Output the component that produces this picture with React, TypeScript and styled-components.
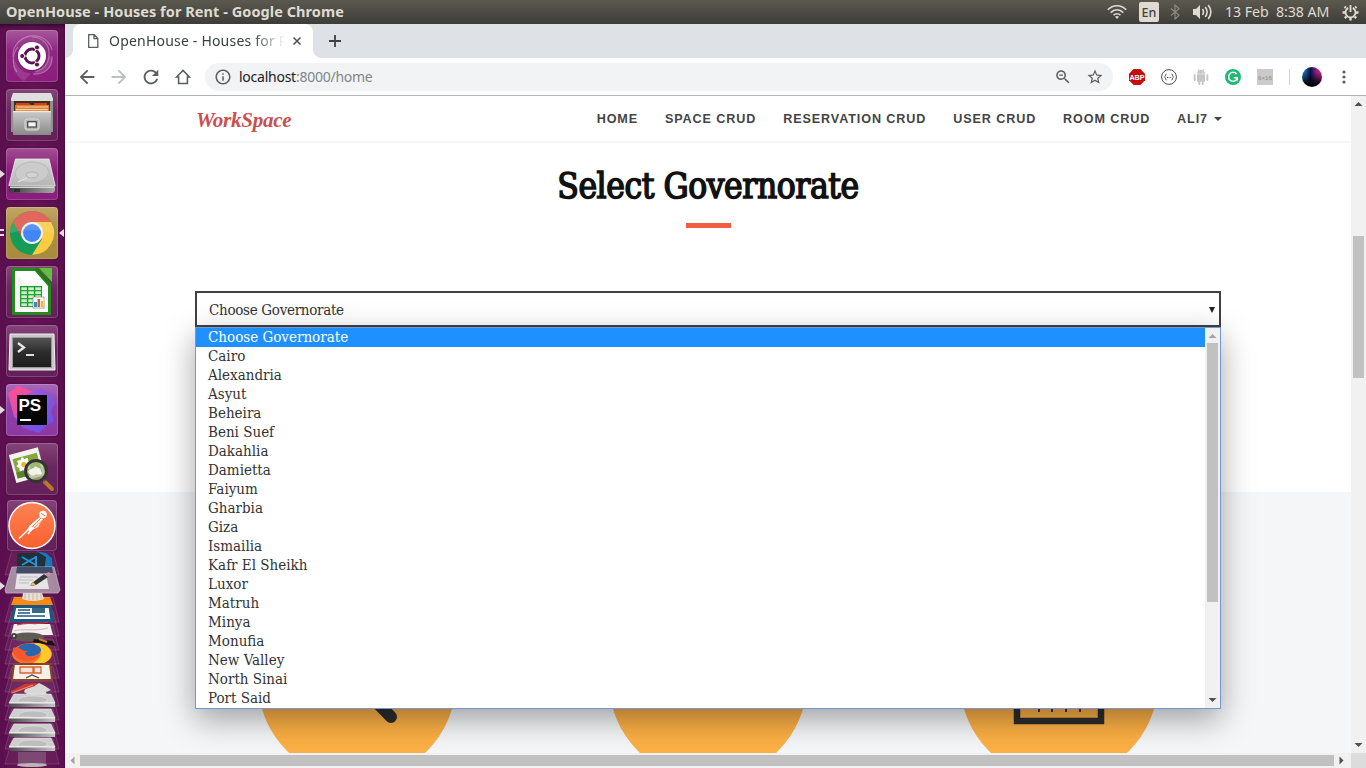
import React from 'react';
import styled, { createGlobalStyle, css } from 'styled-components';

const GlobalStyle = createGlobalStyle`
  *, *::before, *::after { box-sizing: border-box; }
  body { margin: 0; overflow: hidden; background: #fff; }
`;

const uiFont = '"Noto Sans", "Open Sans", sans-serif';
const serifFont = '"DejaVu Serif Condensed", "DejaVu Serif", serif';

/* ---------- desktop ---------- */

const Desktop = styled.div`
  display: flex;
  flex-direction: column;
  width: 1366px;
  height: 768px;
  overflow: hidden;
  font-family: ${uiFont};
`;

const Panel = styled.header`
  display: flex;
  align-items: center;
  height: 24px;
  flex: none;
  padding: 0 7px 0 6px;
  background: linear-gradient(#5b594f, #3d3c38);
  color: #dfdbd2;
`;

const PanelTitle = styled.div`
  flex: 1;
  font-size: 14.5px;
  font-weight: 700;
  line-height: 23px;
  padding-bottom: 1px;
  letter-spacing: 0.06px;
  white-space: pre;
`;

const Indicators = styled.div`
  display: flex;
  align-items: center;
  svg { display: block; }
`;

const Language = styled.div`
  width: 20px;
  height: 20px;
  margin: 0 11px 0 12px;
  border-radius: 2px;
  background: #dfdbd2;
  color: #45443f;
  font-size: 12.5px;
  line-height: 21px;
  font-weight: 500;
  text-align: center;
`;

const VolumeSlot = styled.div`
  margin-left: 13px;
`;

const Clock = styled.div`
  width: 106px;
  margin: 0 11px 0 12px;
  font-size: 14.2px;
  letter-spacing: -0.05px;
  line-height: 24px;
  white-space: pre;
`;

const Work = styled.div`
  display: flex;
  flex: 1;
  min-height: 0;
`;

/* ---------- launcher ---------- */

const Launcher = styled.nav`
  display: flex;
  flex-direction: column;
  width: 65px;
  flex: none;
  padding-top: 6px;
  background:
    linear-gradient(rgba(30, 0, 25, 0.55), transparent 5px),
    linear-gradient(90deg, #5b0f4e, #651455 50%, #5b0f4e 97%, #4a0b40);
`;

const Tile = styled.div<{ $bg?: string; $running?: boolean; $active?: boolean; $small?: boolean }>`
  position: relative;
  width: ${p => (p.$small ? 50 : 52)}px;
  height: ${p => (p.$small ? 51 : 52)}px;
  margin: ${p => (p.$small ? '-2px 0 -2px 7px' : '0 0 7px 6px')};
  flex: none;
  border-radius: 4px;
  background: ${p => p.$bg || 'linear-gradient(#854479, #6a2660 45%, #642059)'};
  box-shadow: inset 0 0 0 1px rgba(255, 255, 255, 0.18), 0 0 2px rgba(40, 0, 35, 0.5);
  svg { display: block; }
  ${p => p.$running && css`
    &::before {
      content: '';
      position: absolute;
      left: -6px;
      top: 22px;
      border: 4px solid transparent;
      border-left: 5px solid #e2dce0;
      border-right: 0;
    }
  `}
  ${p => p.$active && css`
    &::before {
      content: '';
      position: absolute;
      left: -6px;
      top: 22px;
      width: 4px;
      height: 7px;
      border-top: 2.5px solid #e2dce0;
      border-bottom: 2.5px solid #e2dce0;
    }
    &::after {
      content: '';
      position: absolute;
      right: -6px;
      top: 22px;
      border: 4px solid transparent;
      border-right: 5px solid #e2dce0;
      border-left: 0;
    }
  `}
`;

/* ---------- browser chrome ---------- */

const Browser = styled.div`
  display: flex;
  flex-direction: column;
  flex: 1;
  min-width: 0;
`;

const TabStrip = styled.div`
  display: flex;
  height: 34px;
  flex: none;
  padding-left: 8px;
  background: #dee1e6;
`;

const Tab = styled.div`
  position: relative;
  display: flex;
  align-items: center;
  width: 240px;
  height: 34px;
  padding-left: 14px;
  border-radius: 8px 8px 0 0;
  background: #fff;
  &::before, &::after {
    content: '';
    position: absolute;
    bottom: 0;
    width: 8px;
    height: 8px;
  }
  &::before { left: -8px; background: radial-gradient(circle at 0 0, transparent 7.5px, #fff 8px); }
  &::after { right: -8px; background: radial-gradient(circle at 100% 0, transparent 7.5px, #fff 8px); }
  svg { flex: none; }
`;

const TabTitle = styled.div`
  width: 176px;
  margin: 0 8px 0 10px;
  overflow: hidden;
  white-space: nowrap;
  font-size: 14px;
  letter-spacing: 0.2px;
  line-height: 34px;
  color: #3c4043;
  -webkit-mask-image: linear-gradient(90deg, #000 82%, transparent 100%);
  mask-image: linear-gradient(90deg, #000 82%, transparent 100%);
`;

const NewTab = styled.svg`
  margin: 10px 0 0 15px;
`;

const Toolbar = styled.div`
  display: flex;
  align-items: center;
  height: 38px;
  flex: none;
  padding-left: 6px;
  background: #fff;
  border-bottom: 1px solid #b3b4b6;
`;

const ToolCell = styled.div`
  display: flex;
  align-items: center;
  justify-content: center;
  width: 32px;
  height: 36px;
  flex: none;
`;

const Omnibox = styled.div`
  display: flex;
  align-items: center;
  width: 908px;
  height: 28px;
  margin: 1px 8px 0 6px;
  padding: 0 2px 0 2px;
  border-radius: 14px;
  background: #f1f3f4;
`;

const Url = styled.div`
  flex: 1;
  font-size: 14px;
  line-height: 20px;
  letter-spacing: -0.25px;
  color: #80868b;
  b { font-weight: 400; color: #202124; }
`;

const Divider = styled.div`
  width: 1px;
  height: 16px;
  margin: 0 6px 0 8px;
  background: #d0d2d5;
`;

const Avatar = styled.div`
  width: 20px;
  height: 20px;
  border-radius: 50%;
  background:
    linear-gradient(rgba(0, 0, 0, 0) 25%, rgba(0, 0, 10, 0.95) 85%),
    linear-gradient(90deg, #1688b8, #124c8c 25%, #0d0d3c 42%, #3a1b6a 55%, #a01f80 75%, #e8188a);
`;

const SizeBadge = styled.div`
  width: 16px;
  height: 16px;
  background: #cacaca;
  color: #8a8a8a;
  font: 6.2px/17px "Liberation Sans", sans-serif;
  text-align: center;
  white-space: nowrap;
`;

/* ---------- page ---------- */

const PageRow = styled.div`
  display: flex;
  flex: 1;
  min-height: 0;
`;

const Page = styled.main`
  flex: 1;
  min-width: 0;
  height: 657px;
  overflow: hidden;
  background: #fff;
`;

const Navbar = styled.div`
  display: flex;
  align-items: center;
  height: 47px;
  padding: 0 129px 0 131px;
  border-bottom: 2px solid #f6f6f7;
`;

const Brand = styled.div`
  flex: 1;
  padding-top: 3px;
  font: italic 700 21px/40px "Liberation Serif", serif;
  letter-spacing: -0.25px;
  color: #c9504f;
`;

const Menu = styled.div`
  display: flex;
  gap: 26.9px;
  font: 700 12.6px/20px "Liberation Sans", sans-serif;
  letter-spacing: 0.9px;
  color: #444;
  white-space: nowrap;
`;

const Caret = styled.span`
  display: inline-block;
  margin-left: 6px;
  vertical-align: 2px;
  border: 4px solid transparent;
  border-top: 4px solid #444;
  border-bottom: 0;
`;

const Picker = styled.section`
  display: flex;
  flex-direction: column;
  align-items: center;
  height: 349px;
  padding-top: 21px;
`;

const Heading = styled.h2`
  margin: 0;
  font-family: ${serifFont};
  font-size: 35px;
  font-weight: 400;
  line-height: 44px;
  letter-spacing: -0.42px;
  color: #111;
  -webkit-text-stroke: 1.5px #111;
  white-space: nowrap;
`;

const Accent = styled.div`
  width: 45px;
  height: 5px;
  margin: 15px 0 63px 1px;
  background: #f15e41;
`;

const SelectWrap = styled.div`
  position: relative;
  width: 1026px;
  font-family: ${serifFont};
  font-size: 15px;
  color: #333;
`;

const SelectBox = styled.div`
  display: flex;
  align-items: center;
  justify-content: space-between;
  height: 36px;
  padding: 1px 4px 0 12px;
  border: 2px solid #404142;
  background: #fff;
  letter-spacing: -0.3px;
`;

const Popup = styled.div`
  position: absolute;
  z-index: 2;
  top: 36px;
  left: 0;
  display: flex;
  width: 1026px;
  height: 382px;
  border: 1px solid #7596d3;
  background: #fff;
  box-shadow: 0 10px 30px rgba(0, 0, 0, 0.36);
`;

const Options = styled.ul`
  flex: 1;
  margin: 0;
  padding: 0;
  overflow: hidden;
  list-style: none;
`;

const Option = styled.li<{ $selected?: boolean }>`
  height: 19px;
  padding-left: 12px;
  line-height: 18px;
  ${p => p.$selected && css`
    background: #1e90ff;
    color: #fff;
  `}
`;

const Features = styled.section`
  display: flex;
  justify-content: center;
  gap: 153px;
  height: 400px;
  padding-top: 90px;
  background: #f5f6f8;
`;

const Disc = styled.div`
  width: 198px;
  height: 198px;
  border-radius: 50%;
  background: #fdb045;
  svg { display: block; }
`;

/* ---------- scrollbars ---------- */

const VTrack = styled.div`
  display: flex;
  flex-direction: column;
  align-items: center;
  width: 15px;
  flex: none;
  background: #f1f1f1;
`;

const VThumb = styled.div<{ $offset: number; $size: number }>`
  width: 11px;
  height: ${p => p.$size}px;
  margin-top: ${p => p.$offset}px;
  background: #c1c1c1;
`;

const HTrack = styled.div`
  display: flex;
  align-items: center;
  height: 15px;
  flex: none;
  background: #f1f1f1;
`;

const HThumb = styled.div`
  width: 1254px;
  height: 11px;
  background: #c1c1c1;
`;

const Corner = styled.div`
  width: 15px;
  height: 15px;
  margin-left: auto;
  background: #dcdcdc;
`;

type Dir = 'up' | 'down' | 'left' | 'right';
const arrowPaths: Record<Dir, string> = {
  up: 'M3.5 10 7.5 6l4 4z',
  down: 'M3.500 5h8l-4 4z',
  left: 'M9.500 3.500v8l-4-4z',
  right: 'M5.500 3.500v8l4-4z',
};

const ScrollArrow = ({ dir, dim }: { dir: Dir; dim?: boolean }) => (
  <svg width="15" height="15" viewBox="0 0 15 15">
    <path d={arrowPaths[dir]} fill={dim ? '#a3a3a3' : '#505050'} />
  </svg>
);

const PushEnd = styled.div`
  height: 15px;
  margin-top: auto;
  svg { display: block; }
`;

/* ---------- launcher icons ---------- */

const Svg52 = ({ children }: { children: React.ReactNode }) => (
  <svg width="52" height="52" viewBox="0 0 52 52">{children}</svg>
);

const DashIcon = () => (
  <Svg52>
    <g fill="none" stroke="#fff" strokeOpacity=".3" strokeWidth="1.2">
      <path d="M7 27C6 14 17 5 30 6c9 1 15 8 16 14M11 42C6 36 6 23 12 17M46 26c1 12-8 19-19 18M26 7c11 0 18 8 17 19-1 8-6 14-14 16" />
    </g>
    <path d="M46 28c0 12-9 17-20 16 9-3 16-8 17-18zM18 51C9 46 5 36 8 27c2 10 8 15 17 17z" fill="#fff" opacity=".12" />
    <circle cx="26" cy="26.500" r="14.500" fill="#3c0a34" opacity=".3" />
    <circle cx="26" cy="26" r="14" fill="#fff" />
    <circle cx="26" cy="26" r="7" fill="none" stroke="#5e1150" strokeWidth="3" />
    <path d="M26 26 12 26M26 26l7-12.100M26 26l7 12.100" stroke="#fff" strokeWidth="1" />
    <circle cx="26" cy="26" r="5.300" fill="#fff" />
    <g fill="#5e1150" stroke="#fff" strokeWidth=".9">
      <circle cx="16.200" cy="26" r="2.500" /><circle cx="31" cy="17.400" r="2.500" /><circle cx="31" cy="34.600" r="2.500" />
    </g>
  </Svg52>
);

const FilesIcon = () => (
  <Svg52>
    <defs>
      <linearGradient id="cab" x2="0" y2="1"><stop stopColor="#cacaca" /><stop offset="1" stopColor="#8a8a8a" /></linearGradient>
    </defs>
    <path d="M7 4h38l2 6v33H5V10z" fill="#8f8f8f" />
    <path d="M7 4h38l2 6v2H5v-2z" fill="#dedede" />
    <path d="M8 12h36v11H8z" fill="#3f2d20" />
    <path d="M9 16h34v7H9z" fill="#e07a2c" /><path d="M10 14h13l2 2H10zM28 14h13v2H28z" fill="#c9461d" />
    <path d="M11 17.500h31v1H11zM10 20h32v1.300H10z" fill="#f8d6a8" />
    <path d="M7 22h38v24H7z" fill="url(#cab)" /><path d="M7 22h38v1.300H7z" fill="#ececec" />
    <rect x="19" y="30" width="14" height="11" rx="2" fill="#b4b4b4" stroke="#dcdcdc" />
    <rect x="21.700" y="32.700" width="8.600" height="5.300" fill="#f2f2f2" stroke="#444" strokeWidth="1.200" />
  </Svg52>
);

const DriveIcon = () => (
  <Svg52>
    <defs>
      <linearGradient id="drv" x2="0" y2="1"><stop stopColor="#d6d6d6" /><stop offset="1" stopColor="#b5b5b5" /></linearGradient>
      <linearGradient id="drvf"><stop stopColor="#3a3a3a" /><stop offset="1" stopColor="#a9a9a9" /></linearGradient>
    </defs>
    <path d="M9.500 11h33.500L49 37v1H3v-1z" fill="url(#drv)" stroke="#eee" strokeWidth=".8" />
    <path d="M3 38h46v5l-2 2H5l-2-2z" fill="url(#drvf)" />
    <path d="M4 38.500h44v1.500H4z" fill="#d8d8d8" /><path d="M9 41v3M11 41v3M13 41v3" stroke="#111" />
    <path d="M12 31C5 24 13 14 26 14s20 8 15 14c-3 6-14 8-22 6-3-1-5-1-7-3z" fill="#cbcbcb" stroke="#b2b2b2" strokeWidth=".8" />
    <ellipse cx="26" cy="27" rx="6" ry="3" fill="#d2d2d2" stroke="#aaa" strokeWidth=".8" />
    <path d="m12 34 9-4" stroke="#e4e4e4" strokeWidth="1.200" />
  </Svg52>
);

const ChromeIcon = () => (
  <Svg52>
    <circle cx="26" cy="26" r="22" fill="#179b59" />
    <path d="M26 15h19.100A22 22 0 0 1 26 48l10-16z" fill="#fbcb42" />
    <path d="M26 15h19.100a22 22 0 0 0-38.100 0l9.500 16.500A11 11 0 0 1 26 15z" fill="#de5246" />
    <circle cx="26" cy="26" r="11" fill="#f3f3f3" /><circle cx="26" cy="26" r="9" fill="#4285f4" />
    <path d="M4 26a22 22 0 0 1 44 0Q26 20 4 26z" fill="#fff" opacity=".13" />
  </Svg52>
);

const CalcIcon = () => (
  <Svg52>
    <path d="M6 2h26l13 15v32H6z" fill="#248a1c" />
    <path d="M9 5h20l13 15v26H9z" fill="#fff" /><path d="m12 43V10l30 30v3z" fill="#e9e9e9" opacity=".6" />
    <path d="M33 2h13v14z" fill="#5fc23b" /><path d="m30 3 15 16" stroke="#1f7a18" strokeWidth="3" />
    <rect x="14" y="20" width="22" height="21" fill="#1d9a34" />
    <g fill="#c9f3c5">
      {[0, 1, 2, 3, 4].map(r => [0, 1, 2].map(c => <rect key={`${r}${c}`} x={15.3 + c * 7} y={21.3 + r * 4} width="5.600" height="2.800" />))}
    </g>
    <rect x="27" y="31" width="11" height="11" fill="#fff" stroke="#888" strokeWidth=".7" />
    <path d="M28 36h3v5h-3z" fill="#2b8ed6" /><path d="M31.500 33h2.500v8h-2.500z" fill="#e05a1f" /><path d="M34.700 35h2.500v6h-2.500z" fill="#f2b632" />
  </Svg52>
);

const TerminalIcon = () => (
  <Svg52>
    <defs><linearGradient id="trm" x2="0" y2="1"><stop stopColor="#555" /><stop offset=".5" stopColor="#2c2c2c" /><stop offset="1" stopColor="#1d1d1d" /></linearGradient></defs>
    <path d="M4 9h44l1 36H3z" fill="#c9c9c9" stroke="#efefef" />
    <rect x="6.500" y="12.500" width="39" height="30" fill="url(#trm)" stroke="#9b9b9b" />
    <path d="m12 18 6 4.500-6 4.500" fill="none" stroke="#e8e8e8" strokeWidth="2.300" /><path d="M20 30h8" stroke="#f2f2f2" strokeWidth="1.800" />
  </Svg52>
);

const StormText = styled.text`
  font: 700 17px "Liberation Sans", sans-serif;
  fill: #fff;
`;

const StormIcon = () => (
  <Svg52>
    <defs>
      <linearGradient id="st1" x2=".6" y2="1"><stop stopColor="#ff4f8e" /><stop offset=".5" stopColor="#e650a8" /><stop offset="1" stopColor="#9a4dff" /></linearGradient>
      <linearGradient id="st2" x2="1" y2="1"><stop stopColor="#b455d2" /><stop offset="1" stopColor="#5a55f7" /></linearGradient>
    </defs>
    <path d="M2 9 12 2l14 5 15 10-20 24-13-8z" fill="url(#st1)" />
    <path d="M21 10 35 4l10 6 4 9-4 8 3 10-8 5-7 7-16-5-7-8z" fill="url(#st2)" opacity=".9" />
    <rect x="11" y="11" width="30" height="30" fill="#050505" />
    <StormText x="12.500" y="26.800">PS</StormText>
    <path d="M14 36h11" stroke="#fff" strokeWidth="2" />
  </Svg52>
);

const ViewerIcon = () => (
  <Svg52>
    <g transform="rotate(-15 20 22)">
      <rect x="6" y="8" width="30" height="29" fill="#f2f2ef" /><rect x="8.500" y="13" width="25" height="20" fill="#84a83a" />
      <path d="M8.500 27h25v6h-25z" fill="#5b812a" />
      {[0, 45, 90, 135].map(a => <ellipse key={a} cx="18" cy="21" rx="7.500" ry="2.600" fill="#fff" transform={`rotate(${a} 18 21)`} />)}
      <circle cx="18" cy="21" r="2.600" fill="#efb32c" />
    </g>
    <path d="m39 39 7 7" stroke="#b77a2b" strokeWidth="4" strokeLinecap="round" /><path d="m36 35 3 3" stroke="#555" strokeWidth="3" />
    <circle cx="30" cy="28" r="10.500" fill="#a9bc84" fillOpacity=".75" stroke="#333" strokeWidth="2.800" />
    <path d="M22 29c2-5 6-2 7-6 2 2 6 1 6 5 3 4-2 4-5 3-4 3-6 1-8-2z" fill="#fff" opacity=".85" />
  </Svg52>
);

const PostmanIcon = () => (
  <svg width="50" height="51" viewBox="0 0 50 51">
    <defs><linearGradient id="pm" x2="0" y2="1"><stop stopColor="#fb8454" /><stop offset="1" stopColor="#fb5f2e" /></linearGradient></defs>
    <circle cx="25" cy="25.500" r="23" fill="url(#pm)" stroke="#fff" strokeWidth="1.500" />
    <circle cx="36" cy="14.500" r="3.800" fill="#fff" />
    <path d="m33 17-10 8-3 5 3 1 8-4 5-8z" fill="#fff" /><path d="M22 29 12 38.500M25 29l-4 5" stroke="#fff" strokeWidth="1.600" />
    <path d="m34 18-9 9M31 17l-8 8M36 20l-9 8" stroke="#f9734a" strokeWidth="1" />
    <path d="m34 13 4 3" stroke="#f9734a" strokeWidth="1" />
  </svg>
);

const fanTops = [1, 48, 62, 76, 90, 104, 118, 132, 146, 160, 175, 190];

const FoldedStack = () => (
  <svg width="65" height="219" viewBox="0 0 65 219">
    <defs>
      <linearGradient id="mini"><stop stopColor="#4a4a4a" /><stop offset="1" stopColor="#c5c5c5" /></linearGradient>
    </defs>
    {fanTops.map(y => (
      <path key={y} d={`M12 ${y}h41l6 25H5z`} fill="#fff" fillOpacity=".05" stroke="#fff" strokeOpacity=".17" strokeWidth=".8" />
    ))}
    <path d="M17 4 46 4l6 4 1 15-36 1z" fill="#22303b" /><path d="m36 2 10 2 6 5 1 14-9 1 2-16z" fill="#1876bd" />
    <path d="m22 8 14 8M36 8 22 16M36 7v11" stroke="#2294db" strokeWidth="2" fill="none" />
    <path d="M12 18h42l6 23-2 3H6l-1-3z" fill="#aa93a8" fillOpacity=".93" stroke="#c3b1c1" strokeWidth=".8" />
    <path d="M17 18h35l1 6H16z" fill="#1f3a55" opacity=".75" />
    <path d="M17 25h29l3 15H15z" fill="#e6e4e6" /><path d="M20 28h18M19 31h14M19 34h10" stroke="#bdbdbd" />
    <path d="m32 34 12-9 4 3-12 8-6 1z" fill="#333" /><path d="m45 25 4-2 2 2-3 3z" fill="#cf8db2" /><path d="m30 37 3-4 3 3z" fill="#d8c46a" />
    <path d="M0 33l5 4-5 4z" fill="#e2dce0" />
    <path d="M14 48h36l3 8H11z" fill="#f68a13" /><path d="M23 44h19l2 6q-11 4-22 0z" fill="#e4e0dc" /><path d="M25 44v6M29 44v7M33 44v7M37 44v7M41 44v6" stroke="#c99b60" strokeWidth=".6" />
    <path d="M15 57.500h35l2 14H12z" fill="#fff" stroke="#1b577f" strokeWidth="3" /><path d="M18 61h12M18 64h12M17 67h28" stroke="#1b577f" strokeWidth="1.300" /><path d="M32 59h13v5H32z" fill="#356987" />
    <path d="M14 75h36l3 11H11z" fill="#f3f1ef" /><path d="M17 76c12-4 15 1 31-3" stroke="#c9353f" strokeWidth="1.200" fill="none" /><path d="M14 82c8-3 20 1 34-3" stroke="#d8a0a4" strokeWidth=".8" fill="none" />
    <ellipse cx="28" cy="88" rx="16" ry="4.500" fill="#605a55" /><circle cx="14" cy="87" r="3" fill="#45403c" /><circle cx="14" cy="87" r="1" fill="#fff" /><path d="m34 90 18 2 4 5-7-1-16-3z" fill="#171310" /><path d="m39 90 8 3" stroke="#cc7c2e" strokeWidth="2" />
    <ellipse cx="32" cy="105" rx="20" ry="11" fill="#f9732a" /><path d="M34 94c15-1 19 9 17 14-4 7-11 8-18 6 13-7 7-14 1-20z" fill="#ffc928" />
    <ellipse cx="29" cy="101" rx="12" ry="6.500" fill="#2867ad" /><path d="M13 99c7-2 9 4 15 3l-3 2c2 5 11 5 16 0-4 10-24 12-28-1z" fill="#f4572e" />
    <path d="M14 115h36l2 16H12z" fill="#f5f0e8" stroke="#8a4520" strokeWidth="2" /><path d="M20 118h13v6H20zM34 118h7v6h-7z" fill="#fbe2d3" stroke="#d56436" strokeWidth="1.300" /><path d="m26 129 6-3 7 3" fill="none" stroke="#51413a" strokeWidth="1.200" />
    <path d="m27 135 7 2 5-3 6 3 6 4-5 2 1 3-9-1-8 2-6-4z" fill="#d8d8d8" /><path d="m11 145 24-8 2-3-12 1-14 7z" fill="#cf3b32" /><path d="M12 144 33 136" stroke="#f38a7e" />
    {[158, 173, 188, 202].map(y => (
      <g key={y}>
        <path d={`M14 ${y - 13}h37l4 9H9z`} fill="#cecece" stroke="#eee" strokeWidth=".6" />
        <path d={`M17 ${y - 5}c3-6 10-6 18-6s14 3 12 5-9 2-18 1z`} fill="#bdbdbd" stroke="#e3e3e3" strokeWidth=".7" />
        <path d={`M9 ${y - 4}h46v4H11l-2-1z`} fill="url(#mini)" /><path d={`M9 ${y - 4}h46`} stroke="#f4f4f4" />
      </g>
    ))}
    <path d="M18 203h28v14H18z" fill="#aaa" opacity=".3" /><ellipse cx="32" cy="216" rx="15" ry="2" fill="#b9b4b0" />
  </svg>
);

/* ---------- small icons ---------- */

const Glyph = ({ d, size, fill = '#5a5e62' }: { d: string; size: number; fill?: string }) => (
  <svg width={size} height={size} viewBox="0 0 24 24"><path d={d} fill={fill} /></svg>
);

const glyphs = {
  back: 'M20 11H7.830l5.590-5.590L12 4l-8 8 8 8 1.410-1.410L7.830 13H20v-2z',
  forward: 'M12 4l-1.410 1.410L16.170 11H4v2h12.170l-5.580 5.590L12 20l8-8z',
  reload: 'M17.650 6.350C16.200 4.900 14.210 4 12 4c-4.420 0-7.990 3.580-7.990 8s3.570 8 7.990 8c3.730 0 6.840-2.550 7.730-6h-2.080c-.82 2.330-3.040 4-5.650 4-3.310 0-6-2.690-6-6s2.690-6 6-6c1.660 0 3.140.69 4.220 1.780L13 11h7V4l-2.350 2.350z',
  info: 'M11 7h2v2h-2zm0 4h2v6h-2zm1-9C6.480 2 2 6.480 2 12s4.480 10 10 10 10-4.480 10-10S17.520 2 12 2zm0 18c-4.410 0-8-3.590-8-8s3.590-8 8-8 8 3.590 8 8-3.590 8-8 8z',
  zoomOut: 'M15.500 14h-.79l-.28-.27C15.410 12.590 16 11.110 16 9.500 16 5.910 13.090 3 9.500 3S3 5.910 3 9.500 5.910 16 9.500 16c1.610 0 3.090-.59 4.230-1.570l.27.28v.79l5 4.990L20.490 19l-4.990-5zm-6 0C7.010 14 5 11.990 5 9.500S7.010 5 9.500 5 14 7.010 14 9.500 11.990 14 9.500 14zM7 8.800h5v1.400H7z',
  star: 'M22 9.240l-7.190-.62L12 2 9.190 8.630 2 9.240l5.460 4.730L5.820 21 12 17.270 18.180 21l-1.630-7.030L22 9.240zM12 15.400l-3.760 2.270 1-4.280-3.320-2.880 4.380-.38L12 6.100l1.710 4.040 4.380.38-3.320 2.880 1 4.280L12 15.400z',
  android: 'M6 18c0 .55.45 1 1 1h1v3.500c0 .83.67 1.500 1.500 1.500s1.500-.67 1.500-1.500V19h2v3.500c0 .83.67 1.500 1.500 1.500s1.500-.67 1.500-1.500V19h1c.55 0 1-.45 1-1V8H6v10zM2.500 8C1.670 8 1 8.670 1 9.500v7c0 .83.67 1.500 1.500 1.500S4 17.330 4 16.500v-7C4 8.670 3.330 8 2.500 8zm19 0c-.83 0-1.500.67-1.500 1.500v7c0 .83.67 1.500 1.500 1.500s1.500-.67 1.500-1.500v-7c0-.83-.67-1.500-1.500-1.500zm-5.970-5.840l1.300-1.300c.2-.2.2-.51 0-.71-.2-.2-.51-.2-.71 0l-1.480 1.480C13.850 1.230 12.950 1 12 1c-.96 0-1.860.23-2.660.63L7.850.15c-.2-.2-.51-.2-.71 0-.2.2-.2.51 0 .71l1.310 1.310C6.970 3.260 6 5.010 6 7h12c0-1.990-.97-3.750-2.470-4.840zM10 5H9V4h1v1zm5 0h-1V4h1v1z',
};

const HomeGlyph = () => (
  <svg width="18" height="18" viewBox="0 0 18 18">
    <path d="M2.600 9 9 2.500 15.400 9h-2v6.500H4.600V9z" fill="none" stroke="#5a5e62" strokeWidth="1.600" />
  </svg>
);

const BadgeText = styled.text`
  font: 700 7.2px "Liberation Sans", sans-serif;
  fill: #fff;
  text-anchor: middle;
`;

const AdblockGlyph = () => (
  <svg width="16" height="16" viewBox="0 0 16 16">
    <path d="M4.700 0h6.600L16 4.700v6.600L11.300 16H4.700L0 11.300V4.700z" fill="#c70d0c" />
    <BadgeText x="8" y="10.600">ABP</BadgeText>
  </svg>
);

const BracesGlyph = () => (
  <svg width="16" height="16" viewBox="0 0 16 16" fill="none" stroke="#4c4c4c">
    <circle cx="8" cy="8" r="7.400" />
    <path d="M5.500 5C4 5 5 7.500 3.500 8 5 8.500 4 11 5.500 11M10.500 5C12 5 11 7.500 12.500 8 11 8.500 12 11 10.500 11" />
    <path d="M6 8.500h1M7.600 8.500h.9M9.200 8.500h.9" strokeWidth=".9" />
  </svg>
);

const GrammarGlyph = () => (
  <svg width="16" height="16" viewBox="0 0 16 16">
    <circle cx="8" cy="8" r="8" fill="#1fb877" />
    <path d="M11.600 5A4.500 4.500 0 1 0 12.300 9.500M8.700 8.700h3.600v2.800" fill="none" stroke="#fff" strokeWidth="1.500" />
  </svg>
);

const DotsGlyph = () => (
  <svg width="4" height="14" viewBox="0 0 4 14" fill="#5a5e62">
    <circle cx="2" cy="2" r="1.600" /><circle cx="2" cy="7" r="1.600" /><circle cx="2" cy="12" r="1.600" />
  </svg>
);

const WifiGlyph = () => (
  <svg width="20" height="16" viewBox="0 0 20 16" fill="none" stroke="#dfdbd2" strokeWidth="1.600">
    <path d="M.8 5.800C6 .3 14 .3 19.200 5.800M3.700 8.600c3.700-3.800 8.900-3.800 12.600 0M6.500 11.300c2-2.100 5-2.100 7 0" />
    <path d="M10 15 8 12.800q2-1.600 4 0z" fill="#dfdbd2" stroke="none" />
  </svg>
);

const BluetoothGlyph = () => (
  <svg width="10" height="16" viewBox="0 0 10 16" fill="none" stroke="#8b8982" strokeWidth="1.200">
    <path d="m1 4.500 8 6.800L5 15V1l4 3.700-8 6.800" />
  </svg>
);

const VolumeGlyph = () => (
  <svg width="20" height="16" viewBox="0 0 20 16">
    <path d="M0 5h3l4-4v14l-4-4H0z" fill="#dfdbd2" />
    <path d="M9.500 5q2 3 0 6M12.300 3q3.600 5 0 10M15.200 1q5.400 7 0 14" fill="none" stroke="#dfdbd2" strokeWidth="1.600" />
  </svg>
);

const SessionGlyph = () => (
  <svg width="17" height="17" viewBox="0 0 17 17" fill="none" stroke="#dfdbd2">
    <path d="M6.200 3.900a5 5 0 1 0 4.600 0" strokeWidth="1.800" />
    <path d="M8.500 1v7" strokeWidth="1.800" />
    <path d="M3.800 3.800 2.600 2.600M13.200 3.800l1.200-1.200M3 8.500H.5M14 8.500h2.500M4.500 12.500l-1.700 1.700M12.500 12.500l1.700 1.700M8.500 14v2.500" strokeWidth="2.400" />
  </svg>
);

/* ---------- data ---------- */

const governorates = [
  'Choose Governorate', 'Cairo', 'Alexandria', 'Asyut', 'Beheira', 'Beni Suef', 'Dakahlia',
  'Damietta', 'Faiyum', 'Gharbia', 'Giza', 'Ismailia', 'Kafr El Sheikh', 'Luxor', 'Matruh',
  'Minya', 'Monufia', 'New Valley', 'North Sinai', 'Port Said',
];

const links = ['HOME', 'SPACE CRUD', 'RESERVATION CRUD', 'USER CRUD', 'ROOM CRUD'];

export default function App() {
  return (
    <Desktop>
      <GlobalStyle />
      <Panel>
        <PanelTitle>OpenHouse - Houses for Rent - Google Chrome</PanelTitle>
        <Indicators>
          <WifiGlyph />
          <Language>En</Language>
          <BluetoothGlyph />
          <VolumeSlot><VolumeGlyph /></VolumeSlot>
          <Clock>13 Feb  8:38 AM</Clock>
          <SessionGlyph />
        </Indicators>
      </Panel>
      <Work>
        <Launcher>
          <Tile $bg="linear-gradient(#a5579b, #8f2682 40%, #8c1d7d)"><DashIcon /></Tile>
          <Tile><FilesIcon /></Tile>
          <Tile $running $bg="linear-gradient(#a04e93, #8a1c7c 45%, #8d1c80)"><DriveIcon /></Tile>
          <Tile $active $bg="linear-gradient(#c0a765, #ab8f42 45%, #a88c3c)"><ChromeIcon /></Tile>
          <Tile><CalcIcon /></Tile>
          <Tile><TerminalIcon /></Tile>
          <Tile $running $bg="linear-gradient(#a769b8, #8e3fa8 45%, #8c38a4)"><StormIcon /></Tile>
          <Tile><ViewerIcon /></Tile>
          <Tile $small><PostmanIcon /></Tile>
          <FoldedStack />
        </Launcher>
        <Browser>
          <TabStrip>
            <Tab>
              <svg width="12" height="14" viewBox="0 0 12 14" fill="none" stroke="#5a5e62" strokeWidth="1.300">
                <path d="M1.700.7h5.500l3.600 3.600v9H1.700zM7 .7v4h4" />
              </svg>
              <TabTitle>OpenHouse - Houses for Rent</TabTitle>
              <svg width="8" height="8" viewBox="0 0 8 8" stroke="#4a4d51" strokeWidth="1.500"><path d="m.5.5 7 7M7.500.5l-7 7" /></svg>
            </Tab>
            <NewTab width="14" height="14" viewBox="0 0 14 14" stroke="#3c4043" strokeWidth="1.800"><path d="M7 1v12M1 7h12" /></NewTab>
          </TabStrip>
          <Toolbar>
            <ToolCell><Glyph d={glyphs.back} size={22} /></ToolCell>
            <ToolCell><Glyph d={glyphs.forward} size={22} fill="#bcbec0" /></ToolCell>
            <ToolCell><Glyph d={glyphs.reload} size={22} /></ToolCell>
            <ToolCell><HomeGlyph /></ToolCell>
            <Omnibox>
              <ToolCell><Glyph d={glyphs.info} size={18} /></ToolCell>
              <Url><b>localhost</b>:8000/home</Url>
              <ToolCell><Glyph d={glyphs.zoomOut} size={18} /></ToolCell>
              <ToolCell><Glyph d={glyphs.star} size={18} /></ToolCell>
            </Omnibox>
            <ToolCell><AdblockGlyph /></ToolCell>
            <ToolCell><BracesGlyph /></ToolCell>
            <ToolCell><Glyph d={glyphs.android} size={16} fill="#c6c6c6" /></ToolCell>
            <ToolCell><GrammarGlyph /></ToolCell>
            <ToolCell><SizeBadge>6×16</SizeBadge></ToolCell>
            <Divider />
            <ToolCell><Avatar /></ToolCell>
            <ToolCell><DotsGlyph /></ToolCell>
          </Toolbar>
          <PageRow>
            <Page>
              <Navbar>
                <Brand>WorkSpace</Brand>
                <Menu>
                  {links.map(l => <span key={l}>{l}</span>)}
                  <span>ALI7<Caret /></span>
                </Menu>
              </Navbar>
              <Picker>
                <Heading>Select Governorate</Heading>
                <Accent />
                <SelectWrap>
                  <SelectBox>
                    <span>Choose Governorate</span>
                    <svg width="6" height="6" viewBox="0 0 6 6"><path d="M0 0h6L3 6z" fill="#222" /></svg>
                  </SelectBox>
                  <Popup>
                    <Options>
                      {governorates.map((g, i) => <Option key={g} $selected={i === 0}>{g}</Option>)}
                    </Options>
                    <VTrack>
                      <ScrollArrow dir="up" dim />
                      <VThumb $offset={0} $size={259} />
                      <PushEnd><ScrollArrow dir="down" /></PushEnd>
                    </VTrack>
                  </Popup>
                </SelectWrap>
              </Picker>
              <Features>
                <Disc>
                  <svg width="198" height="198" viewBox="0 0 198 198">
                    <circle cx="85" cy="85" r="35" fill="none" stroke="#2d2d2d" strokeWidth="10" />
                    <path d="m106 107 27 28" stroke="#2d2d2d" strokeWidth="12" strokeLinecap="round" />
                  </svg>
                </Disc>
                <Disc />
                <Disc>
                  <svg width="198" height="198" viewBox="0 0 198 198">
                    <path d="M57 60h84v79H57z" fill="none" stroke="#2d2d2d" strokeWidth="6.500" />
                    <path d="M79 122v8M92 122v8M106 122v8M120 122v8" stroke="#3a3226" strokeWidth="2" />
                  </svg>
                </Disc>
              </Features>
            </Page>
            <VTrack>
              <ScrollArrow dir="up" />
              <VThumb $offset={125} $size={142} />
              <PushEnd><ScrollArrow dir="down" /></PushEnd>
            </VTrack>
          </PageRow>
          <HTrack>
            <ScrollArrow dir="left" dim />
            <HThumb />
            <ScrollArrow dir="right" />
            <Corner />
          </HTrack>
        </Browser>
      </Work>
    </Desktop>
  );
}
